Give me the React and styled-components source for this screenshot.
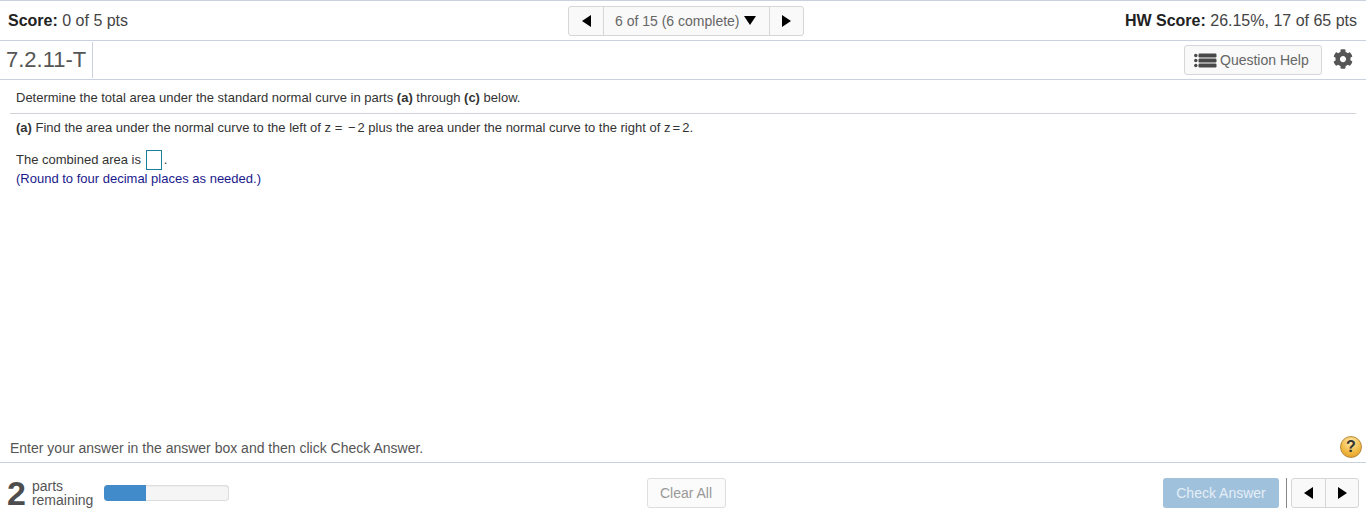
import React from 'react';
import styled, { createGlobalStyle } from 'styled-components';
import { FaCog } from 'react-icons/fa';

const GlobalStyle = createGlobalStyle`
  html, body {
    margin: 0;
    padding: 0;
    background: #ffffff;
    overflow: hidden;
  }
  body {
    font-family: 'Liberation Sans', Arial, sans-serif;
    color: #333333;
  }
`;

const App = () => {
  return (
    <Page>
      <GlobalStyle />
      <ScoreBar>
        <ScoreText>
          <b>Score:</b> 0 of 5 pts
        </ScoreText>
        <Pager>
          <PagerArrow>
            <Triangle dir="left" />
          </PagerArrow>
          <PagerLabel>
            6 of 15 (6 complete)
            <Triangle dir="down" />
          </PagerLabel>
          <PagerArrow>
            <Triangle dir="right" />
          </PagerArrow>
        </Pager>
        <HwScore>
          <b>HW Score:</b> 26.15%, 17 of 65 pts
        </HwScore>
      </ScoreBar>

      <TitleBar>
        <QuestionId>7.2.11-T</QuestionId>
        <TitleTools>
          <HelpButton>
            <ListIcon />
            Question Help
          </HelpButton>
          <GearIcon />
        </TitleTools>
      </TitleBar>

      <Content>
        <Intro>
          Determine the total area under the standard normal curve in parts <b>(a)</b> through <b>(c)</b> below.
        </Intro>
        <PartText>
          <b>(a)</b> Find the area under the normal curve to the left of z = <Minus>−</Minus>2 plus the area under the
          normal curve to the right of <Equation>z = 2.</Equation>
        </PartText>
        <AnswerLine>
          The combined area is <AnswerBox />.
        </AnswerLine>
        <Hint>(Round to four decimal places as needed.)</Hint>
      </Content>

      <InstructionBar>
        Enter your answer in the answer box and then click Check Answer.
        <HelpBadge>?</HelpBadge>
      </InstructionBar>

      <Footer>
        <FooterLeft>
          <PartsCount>2</PartsCount>
          <PartsLabel>
            parts
            <br />
            remaining
          </PartsLabel>
          <Progress>
            <ProgressFill style={{ width: `${(1 / 3) * 100}%` }} />
          </Progress>
        </FooterLeft>
        <ClearButton>Clear All</ClearButton>
        <FooterRight>
          <CheckButton>Check Answer</CheckButton>
          <Divider />
          <SmallPager>
            <SmallArrow>
              <Triangle dir="left" />
            </SmallArrow>
            <SmallArrow>
              <Triangle dir="right" />
            </SmallArrow>
          </SmallPager>
        </FooterRight>
      </Footer>
    </Page>
  );
};

const ListIcon = () => (
  <svg width="23" height="15" viewBox="0 0 23 15" fill="#484848">
    <circle cx="1.8" cy="2.5" r="1.7" />
    <circle cx="1.8" cy="7.5" r="1.7" />
    <circle cx="1.8" cy="12.5" r="1.7" />
    <rect x="4.5" y="0.5" width="18" height="4" rx="1.2" />
    <rect x="4.5" y="5.5" width="18" height="4" rx="1.2" />
    <rect x="4.5" y="10.5" width="18" height="4" rx="1.2" />
  </svg>
);

const Page = styled.div`
  width: 1366px;
  height: 519px;
  display: flex;
  flex-direction: column;
  border-top: 1px solid #c9d0e0;
  box-sizing: border-box;
`;

const ScoreBar = styled.div`
  height: 39px;
  flex: none;
  display: grid;
  grid-template-columns: 1fr auto 1fr;
  align-items: center;
  padding: 0 9px 0 8px;
  border-bottom: 1px solid #c9d0e0;
`;

const ScoreText = styled.div`
  font-size: 16px;
  color: #444444;
  b {
    color: #222222;
  }
`;

const HwScore = styled(ScoreText)`
  justify-self: end;
`;

const Pager = styled.div`
  display: flex;
  height: 30px;
  box-sizing: border-box;
  border: 1px solid #d6d6d6;
  border-radius: 3px;
  background: #f9f9f9;
  margin-left: 7px;
`;

const PagerArrow = styled.div`
  width: 34px;
  display: flex;
  align-items: center;
  justify-content: center;
  &:last-child {
    width: 33px;
  }
`;

const PagerLabel = styled.div`
  width: 167px;
  box-sizing: border-box;
  display: flex;
  align-items: center;
  gap: 4px;
  padding-left: 11px;
  border-left: 1px solid #d6d6d6;
  border-right: 1px solid #d6d6d6;
  font-size: 14px;
  color: #666666;
`;

const Triangle = styled.span`
  display: inline-block;
  width: 0;
  height: 0;
  border-style: solid;
  border-color: transparent;
  ${(props) =>
    props.dir === 'left' &&
    `border-width: 6.5px 9px 6.5px 0; border-right-color: #000;`}
  ${(props) =>
    props.dir === 'right' &&
    `border-width: 6.5px 0 6.5px 9px; border-left-color: #000;`}
  ${(props) =>
    props.dir === 'down' &&
    `border-width: 9px 6.5px 0 6.5px; border-top-color: #000;`}
`;

const TitleBar = styled.div`
  height: 38px;
  flex: none;
  display: flex;
  align-items: stretch;
  justify-content: space-between;
  border-bottom: 1px solid #c9d0e0;
`;

const QuestionId = styled.div`
  font-size: 22px;
  line-height: 35px;
  height: 36px;
  margin-top: 1px;
  padding: 0 6px;
  border-right: 1px solid #c9d0e0;
  color: #555555;
`;

const TitleTools = styled.div`
  display: flex;
  align-items: center;
  gap: 11px;
  padding-right: 13px;
`;

const HelpButton = styled.div`
  width: 138px;
  height: 30px;
  box-sizing: border-box;
  display: flex;
  align-items: center;
  gap: 3px;
  padding-left: 9px;
  border: 1px solid #d6d6d6;
  border-radius: 3px;
  background: #f9f9f9;
  font-size: 14px;
  color: #666666;
`;

const GearIcon = styled(FaCog)`
  width: 20px;
  height: 20px;
  margin-top: -2px;
  color: #555555;
`;

const Content = styled.div`
  flex: 1;
  padding: 0 10px 0 16px;
  font-size: 13px;
  color: #333333;
`;

const Intro = styled.div`
  height: 33px;
  line-height: 36px;
  border-bottom: 1px solid #d2d2d8;
  margin-left: -6px;
  padding-left: 6px;
`;

const PartText = styled.div`
  margin-top: 7px;
  line-height: 14px;
`;

const Minus = styled.span`
  margin: 0 2px;
`;

const Equation = styled.span`
  word-spacing: -1.5px;
`;

const AnswerLine = styled.div`
  margin-top: 15px;
  height: 20px;
  line-height: 20px;
  display: flex;
  align-items: flex-start;
  white-space: pre;
`;

const AnswerBox = styled.span`
  width: 16px;
  height: 20px;
  box-sizing: border-box;
  border: 1px solid #1b7f9c;
  margin: 0 2px 0 1px;
`;

const Hint = styled.div`
  margin-top: 1px;
  line-height: 16px;
  color: #1a1a8c;
`;

const InstructionBar = styled.div`
  height: 28px;
  flex: none;
  display: flex;
  align-items: center;
  justify-content: space-between;
  padding: 0 4px 0 10px;
  border-bottom: 1px solid #c9d0e0;
  font-size: 14px;
  color: #555555;
`;

const HelpBadge = styled.div`
  width: 22px;
  height: 22px;
  margin-bottom: 2px;
  border-radius: 50%;
  display: flex;
  align-items: center;
  justify-content: center;
  background: radial-gradient(circle at 50% 25%, #fde9a8, #f0b840 60%, #dd9420);
  border: 1px solid #b98a3a;
  box-sizing: border-box;
  font-size: 16px;
  font-weight: bold;
  color: #333333;
`;

const Footer = styled.div`
  height: 56px;
  flex: none;
  box-sizing: border-box;
  display: grid;
  grid-template-columns: 1fr auto 1fr;
  align-items: center;
  padding: 4px 7px 0;
`;

const FooterLeft = styled.div`
  display: flex;
  align-items: center;
`;

const PartsCount = styled.div`
  font-size: 34px;
  font-weight: bold;
  line-height: 34px;
  color: #4d4d4d;
`;

const PartsLabel = styled.div`
  margin-left: 6px;
  font-size: 14px;
  line-height: 14px;
  color: #555555;
`;

const Progress = styled.div`
  width: 125px;
  height: 16px;
  margin-left: 11px;
  box-sizing: border-box;
  border-radius: 4px;
  background: #f5f5f5;
  box-shadow: inset 0 0 0 1px #dddddd, inset 0 1px 2px rgba(0, 0, 0, 0.1);
  overflow: hidden;
`;

const ProgressFill = styled.div`
  height: 100%;
  background: #428bca;
`;

const ClearButton = styled.div`
  width: 79px;
  height: 30px;
  box-sizing: border-box;
  margin-left: 6px;
  display: flex;
  align-items: center;
  justify-content: center;
  border: 1px solid #dedede;
  border-radius: 3px;
  background: #fbfbfb;
  font-size: 14px;
  color: #999999;
`;

const FooterRight = styled.div`
  display: flex;
  align-items: center;
  justify-content: flex-end;
`;

const CheckButton = styled.div`
  width: 116px;
  height: 30px;
  display: flex;
  align-items: center;
  justify-content: center;
  border-radius: 3px;
  background: #a0c1dc;
  font-size: 14px;
  color: #e4eef6;
`;

const Divider = styled.div`
  width: 1px;
  height: 30px;
  margin: 0 4px 0 7px;
  background: #888888;
`;

const SmallPager = styled.div`
  display: flex;
  height: 30px;
  box-sizing: border-box;
  border: 1px solid #d6d6d6;
  border-radius: 3px;
  background: #f9f9f9;
`;

const SmallArrow = styled.div`
  width: 33px;
  box-sizing: border-box;
  display: flex;
  align-items: center;
  justify-content: center;
  & + & {
    border-left: 1px solid #d6d6d6;
  }
`;

export default App;
